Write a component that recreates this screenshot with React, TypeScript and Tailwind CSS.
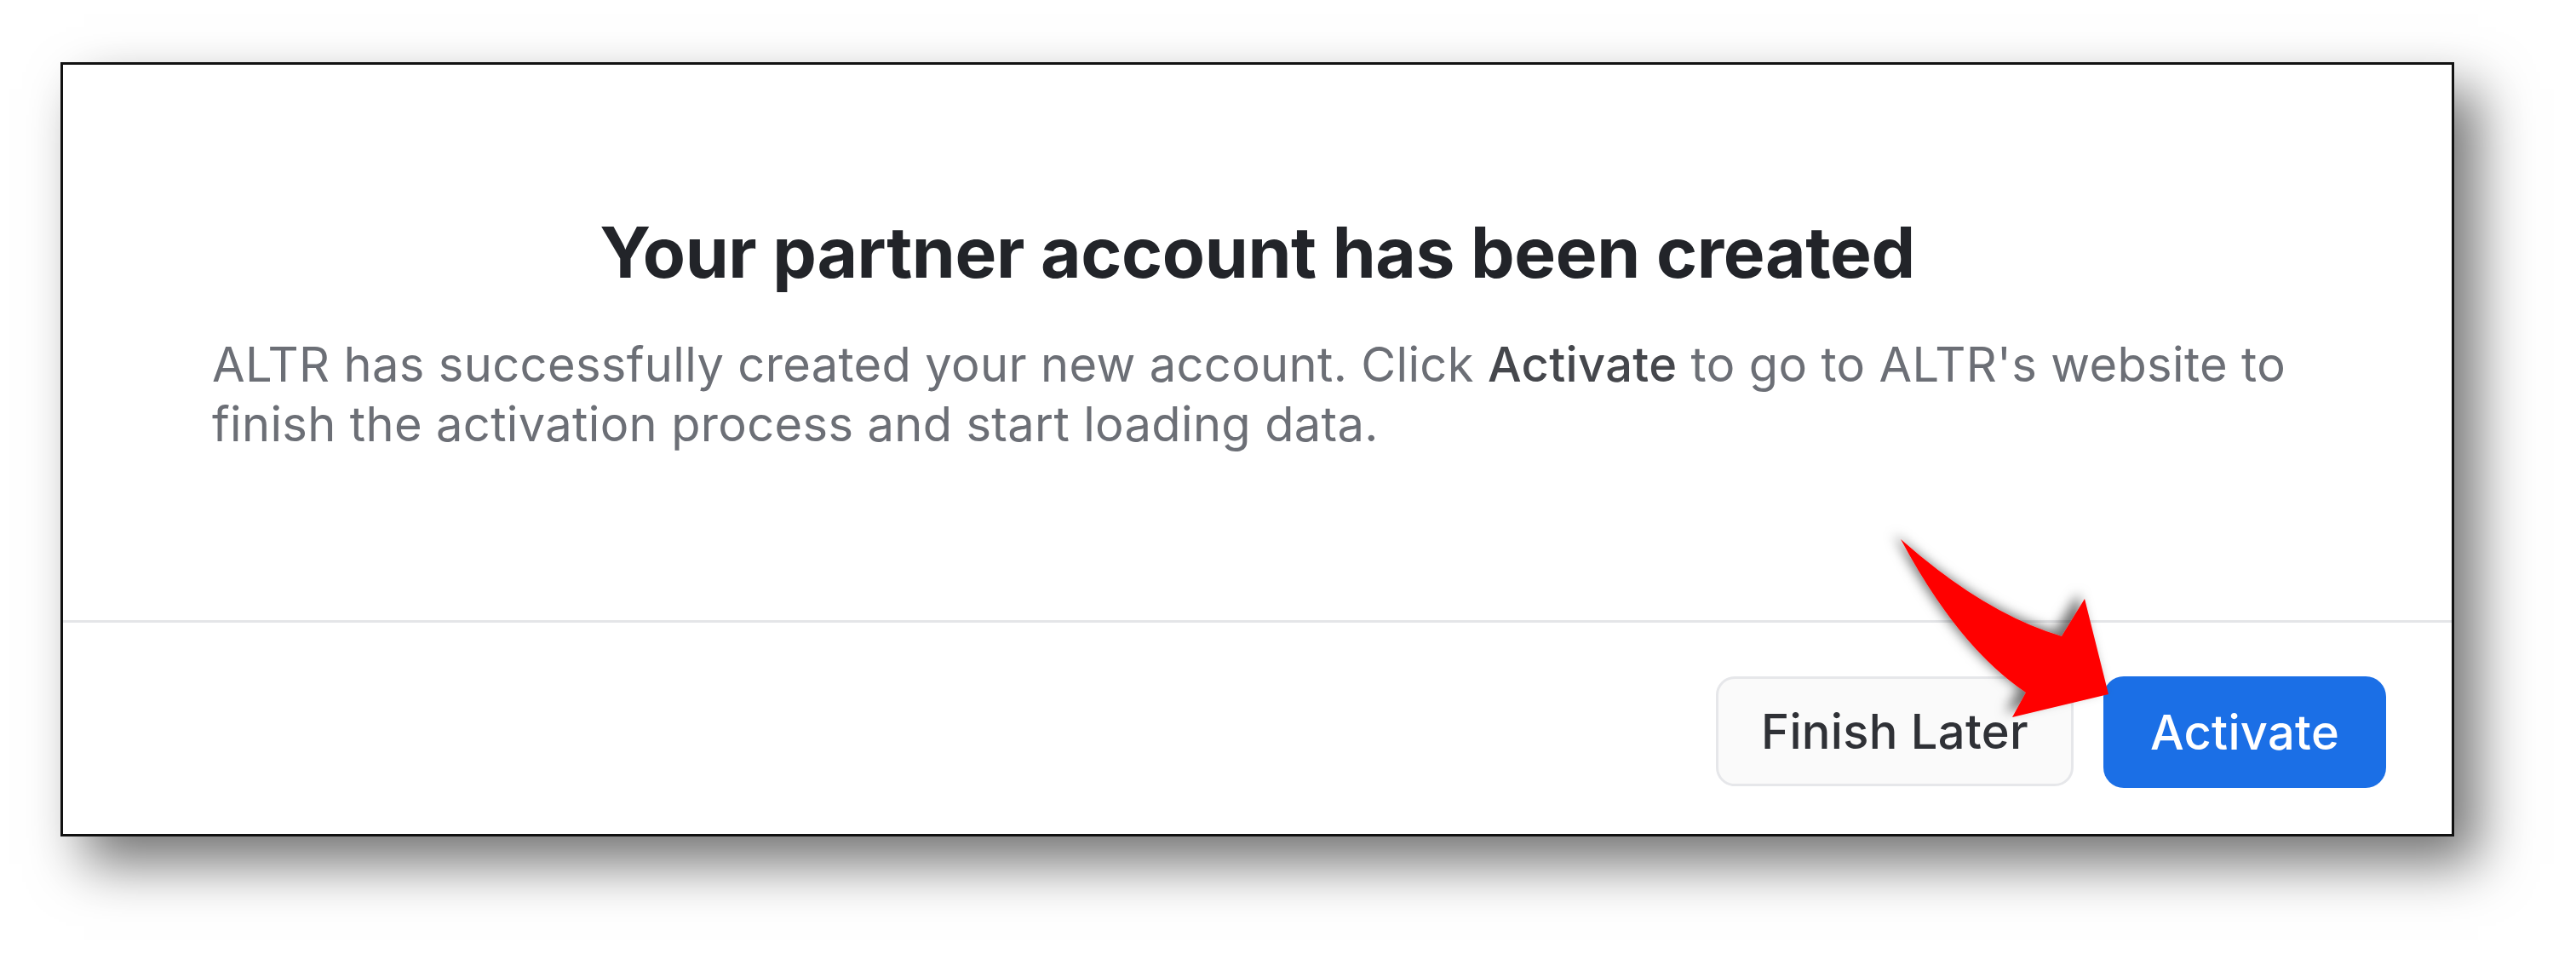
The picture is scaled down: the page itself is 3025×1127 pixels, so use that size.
import React from "react";

export default function App() {
  return (
    <div
      className="relative w-[3025px] h-[1127px] bg-white overflow-hidden pl-[71px] pt-[73px]"
      style={{ fontFamily: "Inter, 'Noto Sans', sans-serif" }}
    >
      <div className="w-[2811px] h-[909px] bg-white border-[3px] border-[#111] flex flex-col shadow-[28px_32px_60px_rgba(0,0,0,0.55)]">
        <div className="h-[652px] pt-[171px] px-[175px] flex flex-col">
          <h1 className="text-center text-[82px] leading-[100px] font-bold text-[#222429] tracking-[-0.4px]">
            Your partner account has been created
          </h1>
          <p className="mt-[46px] text-[56px] leading-[70px] text-[#6c6f76] tracking-[0.35px]">
            ALTR has successfully created your new account. Click{" "}
            <span className="font-medium text-[#45474c]">Activate</span> to go to ALTR's website to
            finish the activation process and start loading data.
          </p>
        </div>
        <div className="h-[3px] bg-[#e4e5e8]" />
        <div className="flex-1 flex justify-end items-start pt-[63px] pr-[77px] gap-[35px]">
          <button className="w-[420px] h-[129px] rounded-[22px] border-[3px] border-[#e6e7ea] bg-[#fafafa] text-[56px] font-medium text-[#2f3136] tracking-[0.3px]">
            Finish Later
          </button>
          <button className="w-[332px] h-[131px] rounded-[24px] bg-[#1b6fe6] text-[56px] font-medium text-white tracking-[0.3px]">
            Activate
          </button>
        </div>
      </div>
      <svg
        className="absolute left-0 top-0 pointer-events-none"
        width="3025"
        height="1127"
        viewBox="0 0 3025 1127"
      >
        <defs>
          <filter id="sh" x="-50%" y="-50%" width="200%" height="200%">
            <feDropShadow dx="-8" dy="-6" stdDeviation="7" floodColor="#000" floodOpacity="0.55" />
          </filter>
        </defs>
        <path
          d="M2232 633 Q2330 720 2421 747 L2448 703 L2476 815 L2363 842 L2379 813 Q2300 760 2232 633 Z"
          fill="#ff0000"
          filter="url(#sh)"
        />
      </svg>
    </div>
  );
}
